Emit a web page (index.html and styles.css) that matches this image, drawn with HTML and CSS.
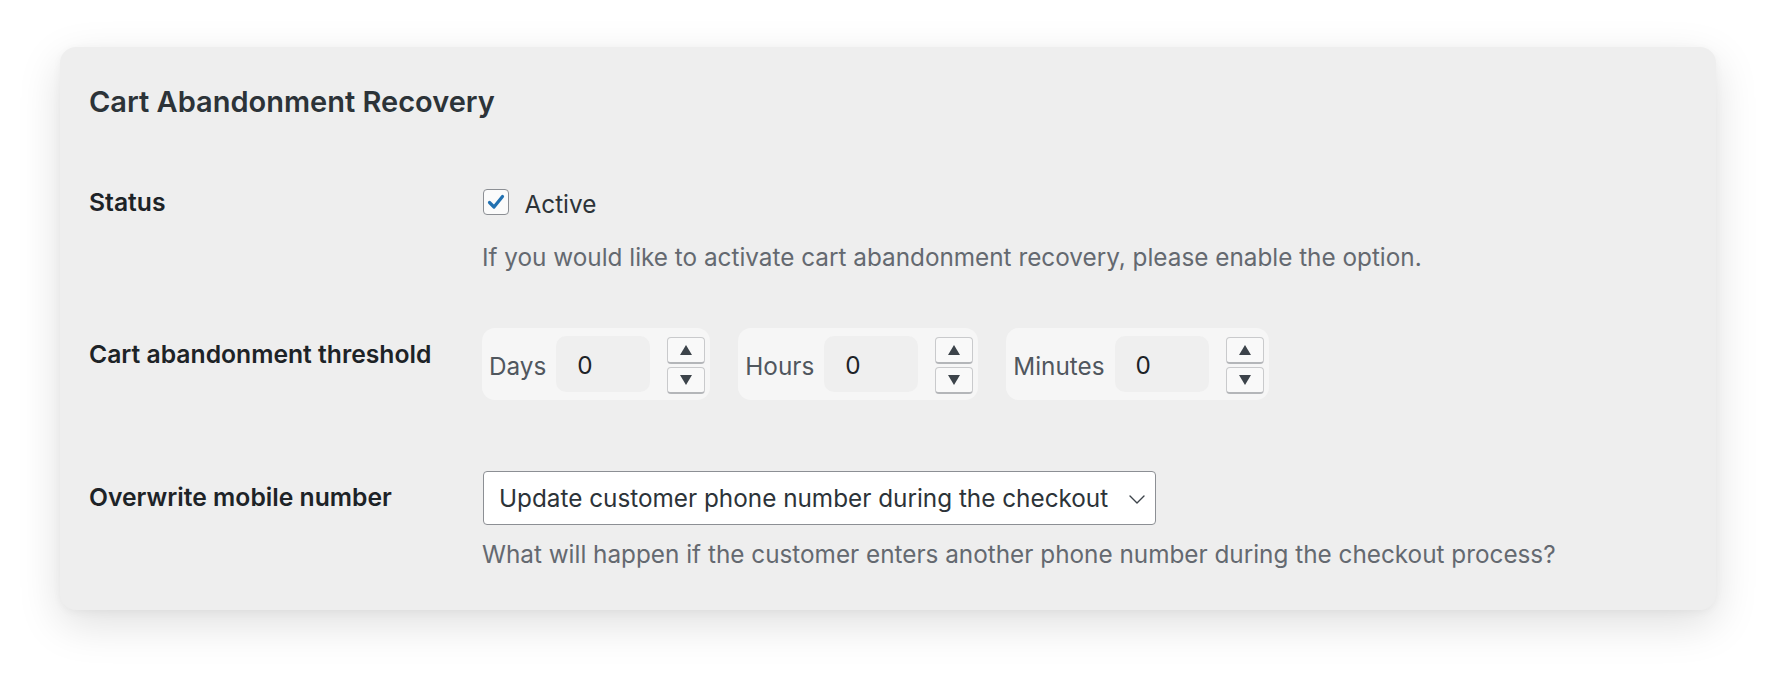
FILE: index.html
```html
<!DOCTYPE html>
<html lang="en">
<head>
<meta charset="utf-8">
<title>Cart Abandonment Recovery</title>
<link rel="stylesheet" href="styles.css">
</head>
<body>
<div class="card">
  <h2 class="card-title">Cart Abandonment Recovery</h2>

  <div class="field field-status">
    <div class="field-label">Status</div>
    <div class="field-value">
      <label class="check-line">
        <span class="checkbox">
          <svg viewBox="0 0 26 26" width="26" height="26"><path d="M6.5 13.5 L11 18 L19.5 7.5" fill="none" stroke="#2271b1" stroke-width="3.2" stroke-linecap="round" stroke-linejoin="round"/></svg>
        </span>
        <span class="check-text">Active</span>
      </label>
      <p class="desc desc-status">If you would like to activate cart abandonment recovery, please enable the option.</p>
    </div>
  </div>

  <div class="field field-threshold">
    <div class="field-label">Cart abandonment threshold</div>
    <div class="field-value time-row">
      <div class="time-group">
        <span class="time-label">Days</span>
        <input class="time-input" type="text" value="0" readonly>
        <div class="spinner">
          <span class="spin-btn"><span class="tri tri-up"></span></span>
          <span class="spin-btn"><span class="tri tri-down"></span></span>
        </div>
      </div>
      <div class="time-group">
        <span class="time-label">Hours</span>
        <input class="time-input" type="text" value="0" readonly>
        <div class="spinner">
          <span class="spin-btn"><span class="tri tri-up"></span></span>
          <span class="spin-btn"><span class="tri tri-down"></span></span>
        </div>
      </div>
      <div class="time-group">
        <span class="time-label">Minutes</span>
        <input class="time-input" type="text" value="0" readonly>
        <div class="spinner">
          <span class="spin-btn"><span class="tri tri-up"></span></span>
          <span class="spin-btn"><span class="tri tri-down"></span></span>
        </div>
      </div>
    </div>
  </div>

  <div class="field field-mobile">
    <div class="field-label">Overwrite mobile number</div>
    <div class="field-value">
      <div class="select">
        <span class="select-text">Update customer phone number during the checkout</span>
        <svg class="chev" viewBox="0 0 16 9" width="16" height="9"><path d="M1 1 L8 8 L15 1" fill="none" stroke="#3c434a" stroke-width="1.4" stroke-linecap="round" stroke-linejoin="round"/></svg>
      </div>
      <p class="desc desc-mobile">What will happen if the customer enters another phone number during the checkout process?</p>
    </div>
  </div>
</div>
</body>
</html>
```
FILE: styles.css
```css
* { box-sizing: border-box; }

html, body {
  margin: 0;
  padding: 0;
  background: #ffffff;
}

body {
  font-family: Inter, "Liberation Sans", sans-serif;
  color: #1d2327;
  padding: 47px 60px 75px;
  min-height: 685px;
}

.card {
  background: #eeeeee;
  border-radius: 16px;
  padding: 37px 29px 41px;
  box-shadow: 0 14px 44px rgba(0, 0, 0, 0.13), 0 2px 8px rgba(0, 0, 0, 0.04);
}

.card-title {
  margin: 0 0 67px;
  font-size: 29px;
  line-height: 36px;
  font-weight: 600;
  color: #2c3338;
  letter-spacing: 0;
}

.field {
  display: grid;
  grid-template-columns: 393px 1fr;
}

.field-label {
  font-size: 24.7px;
  line-height: 30px;
  font-weight: 600;
  color: #1d2327;
}

.field-threshold {
  margin-top: 56px;
}
.field-threshold .field-label {
  margin-top: 11px;
}

.field-mobile {
  margin-top: 71px;
}
.field-mobile .field-label {
  margin-top: 11px;
}

.check-line {
  display: flex;
  align-items: center;
  height: 30px;
  gap: 16px;
}

.checkbox {
  width: 26px;
  height: 26px;
  border: 1px solid #8c8f94;
  border-radius: 4px;
  background: #fbfbfb;
  display: flex;
  align-items: center;
  justify-content: center;
  margin-left: 0.5px;
}
.checkbox svg { display: block; margin: -1px; }

.check-text {
  font-size: 24.3px;
  line-height: 30px;
  color: #2c3338;
  margin-top: 3px;
}

.desc {
  margin: 0;
  font-size: 24.3px;
  line-height: 30px;
  color: #646970;
}
.desc-status { margin-top: 25px; }
.desc-mobile { margin-top: 14px; }

.time-row {
  display: flex;
  align-items: flex-start;
  gap: 28px;
}

.time-group {
  display: flex;
  align-items: center;
  height: 72px;
  padding: 0 5px 0 7px;
  background: #f6f6f6;
  border-radius: 13px;
}

.time-label {
  font-size: 24.3px;
  line-height: 30px;
  color: #50575e;
  margin-top: 4px;
}

.time-input {
  width: 94px;
  height: 56px;
  margin-left: 10px;
  border: none;
  border-radius: 10px;
  background: #efefef;
  padding: 2px 0 0 21px;
  font-family: Inter, "Liberation Sans", sans-serif;
  font-size: 24.3px;
  color: #1d2327;
  outline: none;
}

.spinner {
  display: flex;
  flex-direction: column;
  gap: 3px;
  margin-left: 17px;
  margin-top: 2px;
}

.spin-btn {
  width: 38px;
  height: 27px;
  background: #f9f9f9;
  border: 1px solid #c9cacc;
  border-bottom: 2px solid #b4b6b9;
  border-radius: 4px;
  display: flex;
  align-items: center;
  justify-content: center;
}

.tri {
  width: 0;
  height: 0;
  border-left: 6px solid transparent;
  border-right: 6px solid transparent;
}
.tri-up { border-bottom: 10px solid #3c434a; }
.tri-down { border-top: 10px solid #3c434a; }

.select {
  width: 673px;
  height: 54px;
  border: 1px solid #8c8f94;
  border-radius: 4px;
  background: #ffffff;
  display: flex;
  align-items: center;
  justify-content: space-between;
  padding: 0 10px 0 15px;
  margin-left: 1px;
}

.select-text {
  font-size: 24.3px;
  line-height: 30px;
  color: #2c3338;
}

.chev { display: block; margin-top: 2px; }
```
